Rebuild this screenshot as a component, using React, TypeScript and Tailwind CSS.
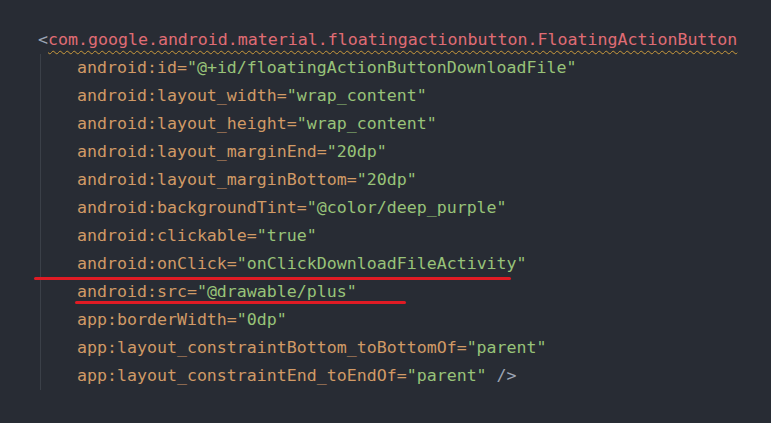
type Tok = { t: string; c: 'attr' | 'str' | 'punct' };

const attrs: [string, string][] = [
  ['android:id', '@+id/floatingActionButtonDownloadFile'],
  ['android:layout_width', 'wrap_content'],
  ['android:layout_height', 'wrap_content'],
  ['android:layout_marginEnd', '20dp'],
  ['android:layout_marginBottom', '20dp'],
  ['android:backgroundTint', '@color/deep_purple'],
  ['android:clickable', 'true'],
  ['android:onClick', 'onClickDownloadFileActivity'],
  ['android:src', '@drawable/plus'],
  ['app:borderWidth', '0dp'],
  ['app:layout_constraintBottom_toBottomOf', 'parent'],
  ['app:layout_constraintEnd_toEndOf', 'parent'],
];

const colors = {
  attr: 'text-[#d19a66]',
  str: 'text-[#98c379]',
  punct: 'text-[#9da5b4]',
};

function Line({ name, value, last }: { name: string; value: string; last?: boolean }) {
  const toks: Tok[] = [
    { t: name + '=', c: 'attr' },
    { t: `"${value}"`, c: 'str' },
  ];
  if (last) toks.push({ t: ' />', c: 'punct' });
  return (
    <div className="whitespace-pre pl-[37px]">
      {toks.map((k, i) => (
        <span key={i} className={colors[k.c]}>
          {k.t}
        </span>
      ))}
    </div>
  );
}

export default function App() {
  return (
    <div className="relative h-[423px] w-[771px] overflow-hidden bg-[#282c34]">
      <div
        className="pl-[38px] pt-[26px] text-[16.6px] leading-[28px]"
        style={{ fontFamily: '"DejaVu Sans Mono", "Liberation Mono", monospace' }}
      >
        <div className="whitespace-pre">
          <span className="text-[#9da5b4]">&lt;</span>
          <span className="text-[#e06c75] underline decoration-[#c99a3c] decoration-wavy decoration-1 underline-offset-[5px]">
            com.google.android.material.floatingactionbutton.FloatingActionButton
          </span>
        </div>
        <div className="ml-[2px] border-l border-[#3b4048]">
          <div className="-ml-px">
            {attrs.map(([n, v], i) => (
              <Line key={n} name={n} value={v} last={i === attrs.length - 1} />
            ))}
          </div>
        </div>
      </div>

      {/* red annotation strokes */}
      <div className="absolute left-[34px] top-[277px] h-[3px] w-[477px] rounded-full bg-[#e01b24]" />
      <div className="absolute left-[75px] top-[301px] h-[3px] w-[331px] rounded-full bg-[#e01b24]" />
    </div>
  );
}
